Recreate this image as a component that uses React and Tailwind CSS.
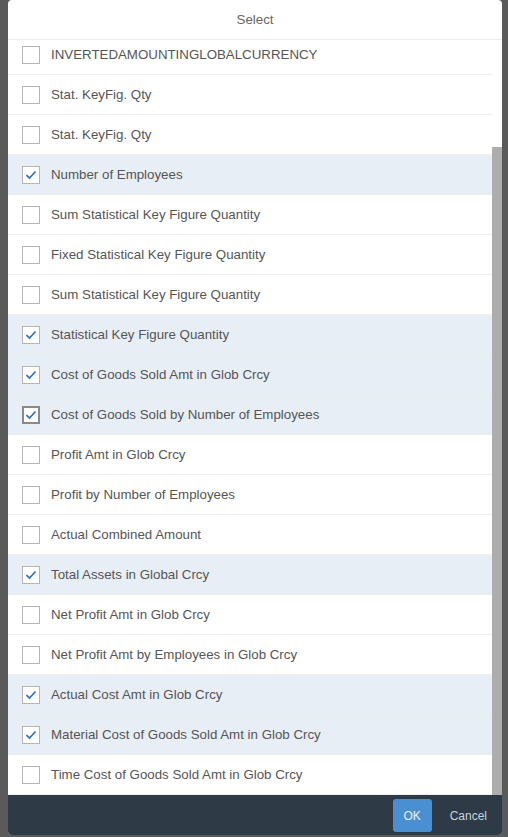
import React from "react";

const items = [
  ["INVERTEDAMOUNTINGLOBALCURRENCY", false],
  ["Stat. KeyFig. Qty", false],
  ["Stat. KeyFig. Qty", false],
  ["Number of Employees", true],
  ["Sum Statistical Key Figure Quantity", false],
  ["Fixed Statistical Key Figure Quantity", false],
  ["Sum Statistical Key Figure Quantity", false],
  ["Statistical Key Figure Quantity", true],
  ["Cost of Goods Sold Amt in Glob Crcy", true],
  ["Cost of Goods Sold by Number of Employees", true, true],
  ["Profit Amt in Glob Crcy", false],
  ["Profit by Number of Employees", false],
  ["Actual Combined Amount", false],
  ["Total Assets in Global Crcy", true],
  ["Net Profit Amt in Glob Crcy", false],
  ["Net Profit Amt by Employees in Glob Crcy", false],
  ["Actual Cost Amt in Glob Crcy", true],
  ["Material Cost of Goods Sold Amt in Glob Crcy", true],
  ["Time Cost of Goods Sold Amt in Glob Crcy", false],
];

function Check({ checked, focused }) {
  return (
    <div
      className={
        "w-[18px] h-[18px] bg-white flex items-center justify-center shrink-0 " +
        (focused ? "border-2 border-[#8a8a8a]" : "border border-[#b5b5b5]")
      }
    >
      {checked && (
        <svg width="12" height="10" viewBox="0 0 12 10">
          <path d="M1.5 5.2 L4.5 8 L10.5 1.5" fill="none" stroke="#2f6fbb" strokeWidth="1.7" />
        </svg>
      )}
    </div>
  );
}

export default function App() {
  return (
    <div
      className="w-[508px] h-[837px] bg-[#5a5a5a] overflow-hidden"
      style={{ fontFamily: '"Liberation Sans", Arial, sans-serif' }}
    >
      <div className="ml-[8px] w-[494px] h-[835px] bg-white rounded-[4px] overflow-hidden flex flex-col">
        <div className="h-[40px] shrink-0 flex items-center justify-center border-b border-[#ececec] text-[13.3px] text-[#666]">
          Select
        </div>
        <div className="flex-1 flex min-h-0">
          <div className="flex-1 overflow-hidden">
            <div className="-mt-[5px]">
              {items.map(([label, checked, focused], i) => (
                <div
                  key={i}
                  className={
                    "h-[40px] flex items-center pl-[14px] gap-[11px] border-b border-[#eeeeee] text-[13.3px] text-[#555] " +
                    (checked ? "bg-[#e7eef6]" : "bg-white")
                  }
                >
                  <Check checked={checked} focused={focused} />
                  <span>{label}</span>
                </div>
              ))}
            </div>
          </div>
          <div className="w-[10px] flex flex-col bg-white">
            <div className="h-[107px]" />
            <div className="flex-1 bg-[#adadad]" />
          </div>
        </div>
        <div className="h-[40px] shrink-0 bg-[#2e3a46] flex items-start justify-end pt-[4px] pr-[15px]">
          <button className="h-[33px] w-[39px] rounded-[3px] bg-[#4a8fd1] text-[12px] text-[#eef3f8] flex items-center justify-center">
            OK
          </button>
          <button className="h-[33px] ml-[18px] text-[12px] text-[#c9d3dd] flex items-center">
            Cancel
          </button>
        </div>
      </div>
    </div>
  );
}
